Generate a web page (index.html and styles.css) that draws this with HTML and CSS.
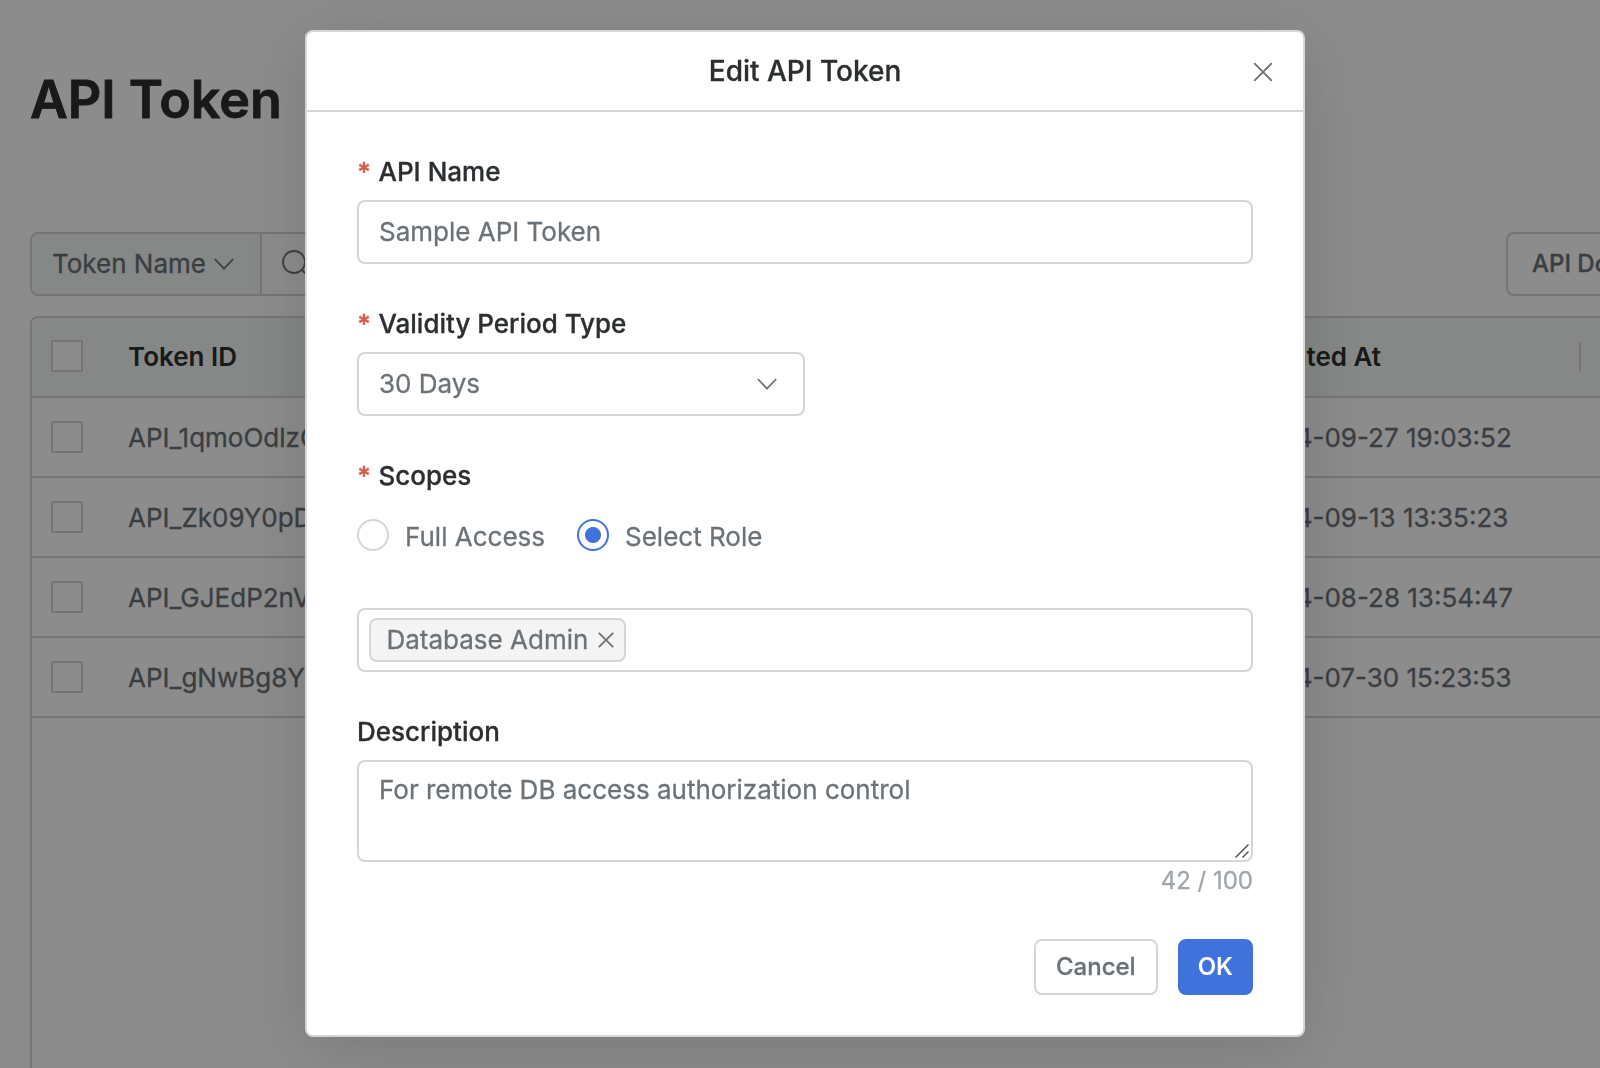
FILE: index.html
```
<!DOCTYPE html>
<html lang="en">
<head>
<meta charset="utf-8">
<title>API Token</title>
<link rel="stylesheet" href="styles.css">
</head>
<body>
<main class="page">
  <h1 class="page-title">API Token</h1>
  <div class="toolbar">
    <div class="search">
      <div class="search-type">
        <span>Token Name</span>
        <svg class="chevron" viewBox="0 0 20 12"><path d="M.8 1 10 10.6 19.2 1"/></svg>
      </div>
      <div class="search-field">
        <svg class="search-icon" viewBox="0 0 30 30"><circle cx="12" cy="12" r="11"/><path d="m20 20 8 8"/></svg>
      </div>
    </div>
    <button class="docs-button">API Docs</button>
  </div>
  <div class="table">
    <div class="row head">
      <i class="checkbox"></i><span>Token ID</span><span class="created">Created At</span><i class="separator"></i>
    </div>
    <div class="row"><i class="checkbox"></i><span>API_1qmoOdlzC</span><span>2024-09-27 19:03:52</span></div>
    <div class="row"><i class="checkbox"></i><span>API_Zk09Y0pD</span><span>2024-09-13 13:35:23</span></div>
    <div class="row"><i class="checkbox"></i><span>API_GJEdP2nV</span><span>2024-08-28 13:54:47</span></div>
    <div class="row"><i class="checkbox"></i><span>API_gNwBg8Y</span><span>2024-07-30 15:23:53</span></div>
  </div>
</main>

<div class="overlay">
  <section class="modal" role="dialog" aria-label="Edit API Token">
    <header class="modal-header">
      <h2 class="modal-title">Edit API Token</h2>
      <svg class="close" viewBox="0 0 20 20"><path d="m1.2 1.2 17.6 17.6M18.8 1.2 1.2 18.8"/></svg>
    </header>
    <div class="modal-body">
      <div class="field">
        <div class="label"><span class="required">*</span>API Name</div>
        <div class="input">Sample API Token</div>
      </div>
      <div class="field">
        <div class="label"><span class="required">*</span>Validity Period Type</div>
        <div class="input select">
          <span>30 Days</span>
          <svg class="chevron" viewBox="0 0 20 12"><path d="M.8 1 10 10.6 19.2 1"/></svg>
        </div>
      </div>
      <div class="field scopes">
        <div class="label"><span class="required">*</span>Scopes</div>
        <div class="radios">
          <div class="radio"><i class="dot"></i><span>Full Access</span></div>
          <div class="radio"><i class="dot checked"></i><span>Select Role</span></div>
        </div>
      </div>
      <div class="input roles">
        <div class="tag">
          <span>Database Admin</span>
          <svg class="tag-close" viewBox="0 0 16 16"><path d="m.8.8 14.4 14.4M15.2.8.8 15.2"/></svg>
        </div>
      </div>
      <div class="field description">
        <div class="label">Description</div>
        <div class="textarea">
          <span>For remote DB access authorization control</span>
          <svg class="resizer" viewBox="0 0 14 14"><path d="M.5 13.5l13-13M7.5 13.5l6-6"/></svg>
        </div>
        <div class="count">42 / 100</div>
      </div>
      <footer class="actions">
        <button class="button">Cancel</button>
        <button class="button primary">OK</button>
      </footer>
    </div>
  </section>
</div>
</body>
</html>
```
FILE: styles.css
```
* { box-sizing: border-box; }

body {
  margin: 0;
  height: 1068px;
  overflow: hidden;
  background: #fff;
  color: #6b7278;
  font-family: Inter, sans-serif;
  font-size: 26px;
  line-height: 40px;
  -webkit-text-stroke: .3px;
}

svg { flex: none; fill: none; stroke: currentColor; stroke-width: 1.8; }
button { font: inherit; }

.page {
  display: flex;
  flex-direction: column;
  width: 1670px;
  height: 1068px;
  padding: 68px 0 0 30px;
}

.page-title {
  margin: 0 0 100px;
  color: #2c2f31;
  font-size: 52px;
  font-weight: 600;
  line-height: 64px;
  -webkit-text-stroke: .8px;
}

.toolbar { display: flex; justify-content: space-between; height: 64px; margin-bottom: 20px; }

.search {
  display: flex;
  width: 600px;
  border: 2px solid #d5d5da;
  border-radius: 8px;
  overflow: hidden;
}

.search-type {
  display: flex;
  align-items: center;
  gap: 8px;
  width: 230px;
  padding-left: 20px;
  border-right: 2px solid #d5d5da;
  background: #f2f7f4;
}

.search-field { display: flex; align-items: center; padding: 2px 0 0 20px; }
.search-icon { width: 30px; height: 30px; }
.chevron { width: 20px; height: 12px; }

.docs-button {
  width: 164px;
  padding: 0 0 0 24px;
  border: 2px solid #d5d5da;
  border-radius: 8px;
  background: #fff;
  color: #6b7278;
  font-size: 24px;
  font-weight: 500;
  text-align: left;
}

.table {
  flex: 1;
  border: solid #d5d5da;
  border-width: 2px 0 0 2px;
  border-radius: 8px 0 0;
  overflow: hidden;
}

.row {
  display: grid;
  grid-template-columns: 96px 1120px 331px 2px;
  align-items: center;
  height: 80px;
  border-bottom: 2px solid #d5d5da;
}

.row:not(.head) span { padding-top: 2px; }
.head { background: #f2f7f4; color: #2c2f31; font-weight: 600; -webkit-text-stroke: 0; }
.head .checkbox { margin-bottom: 2px; }
.created { margin-left: -1px; }

.checkbox {
  width: 32px;
  height: 32px;
  margin-left: 19px;
  border: 2px solid #d5d5da;
  border-radius: 2px;
  background: #fff;
}

.separator { height: 30px; background: #d5d5da; }

.overlay {
  position: fixed;
  inset: 0;
  display: flex;
  align-items: flex-start;
  padding: 30px 0 0 305px;
  background: rgba(0, 0, 0, .45);
}

.modal {
  width: 1000px;
  height: 1007px;
  border: 2px solid #d5d5da;
  border-radius: 8px;
  background: #fff;
  box-shadow: 0 12px 72px rgba(0, 0, 0, .15);
}

.modal-header {
  display: flex;
  align-items: center;
  height: 80px;
  padding: 2px 30px 0 50px;
  border-bottom: 2px solid #d5d5da;
}

.modal-title {
  flex: 1;
  margin: 0 0 2px;
  color: #2c2f31;
  font-size: 28px;
  font-weight: 500;
  text-align: center;
}

.close { width: 20px; height: 20px; }
.modal-body { padding: 40px 50px 0; }
.field { margin-bottom: 40px; }

.label {
  display: flex;
  height: 40px;
  margin-bottom: 8px;
  color: #2c2f31;
  font-weight: 500;
}

.required { width: 21.5px; color: #dc5a4b; font-weight: 600; }

.input {
  display: flex;
  align-items: center;
  height: 64px;
  padding: 0 20px;
  border: 2px solid #d5d5da;
  border-radius: 8px;
}

.select { justify-content: space-between; width: 448px; padding-right: 26px; }
.scopes { margin-bottom: 52px; }
.radios { display: flex; gap: 32px; padding-top: 12px; }
.radio { display: flex; gap: 16px; height: 40px; }
.radio span { padding-top: 1px; }

.dot {
  width: 32px;
  height: 32px;
  margin-top: 3px;
  border: 2px solid #d5d5da;
  border-radius: 50%;
}

.checked { border-color: #4172dc; background: radial-gradient(circle, #4172dc 7.5px, #fff 8.5px); }

.roles { margin-bottom: 40px; padding: 0 10px; }

.tag {
  display: flex;
  align-items: center;
  gap: 9.5px;
  width: 257px;
  height: 44px;
  padding-left: 15.5px;
  border: 2px solid #d5d5da;
  border-radius: 8px;
  background: #f4f4f5;
}

.tag-close { width: 16px; height: 16px; }

.textarea {
  position: relative;
  height: 102px;
  padding: 8px 20px;
  border: 2px solid #d5d5da;
  border-radius: 8px;
}

.resizer {
  position: absolute;
  right: 2px;
  bottom: 2px;
  width: 14px;
  height: 14px;
  color: #4a4a4a;
  stroke-width: 1.4;
}

.count { height: 37px; color: #a0a6ac; font-size: 24px; line-height: 37px; text-align: right; }
.actions { display: flex; justify-content: flex-end; gap: 20px; }

.button {
  height: 56px;
  padding: 0 20px;
  border: 2px solid #d5d5da;
  border-radius: 8px;
  background: #fff;
  color: #6b7278;
  font-size: 24px;
  font-weight: 500;
}

.primary { padding: 0 18px; border-color: #4172dc; background: #4172dc; color: #fff; font-weight: 600; -webkit-text-stroke: 0; }
```
